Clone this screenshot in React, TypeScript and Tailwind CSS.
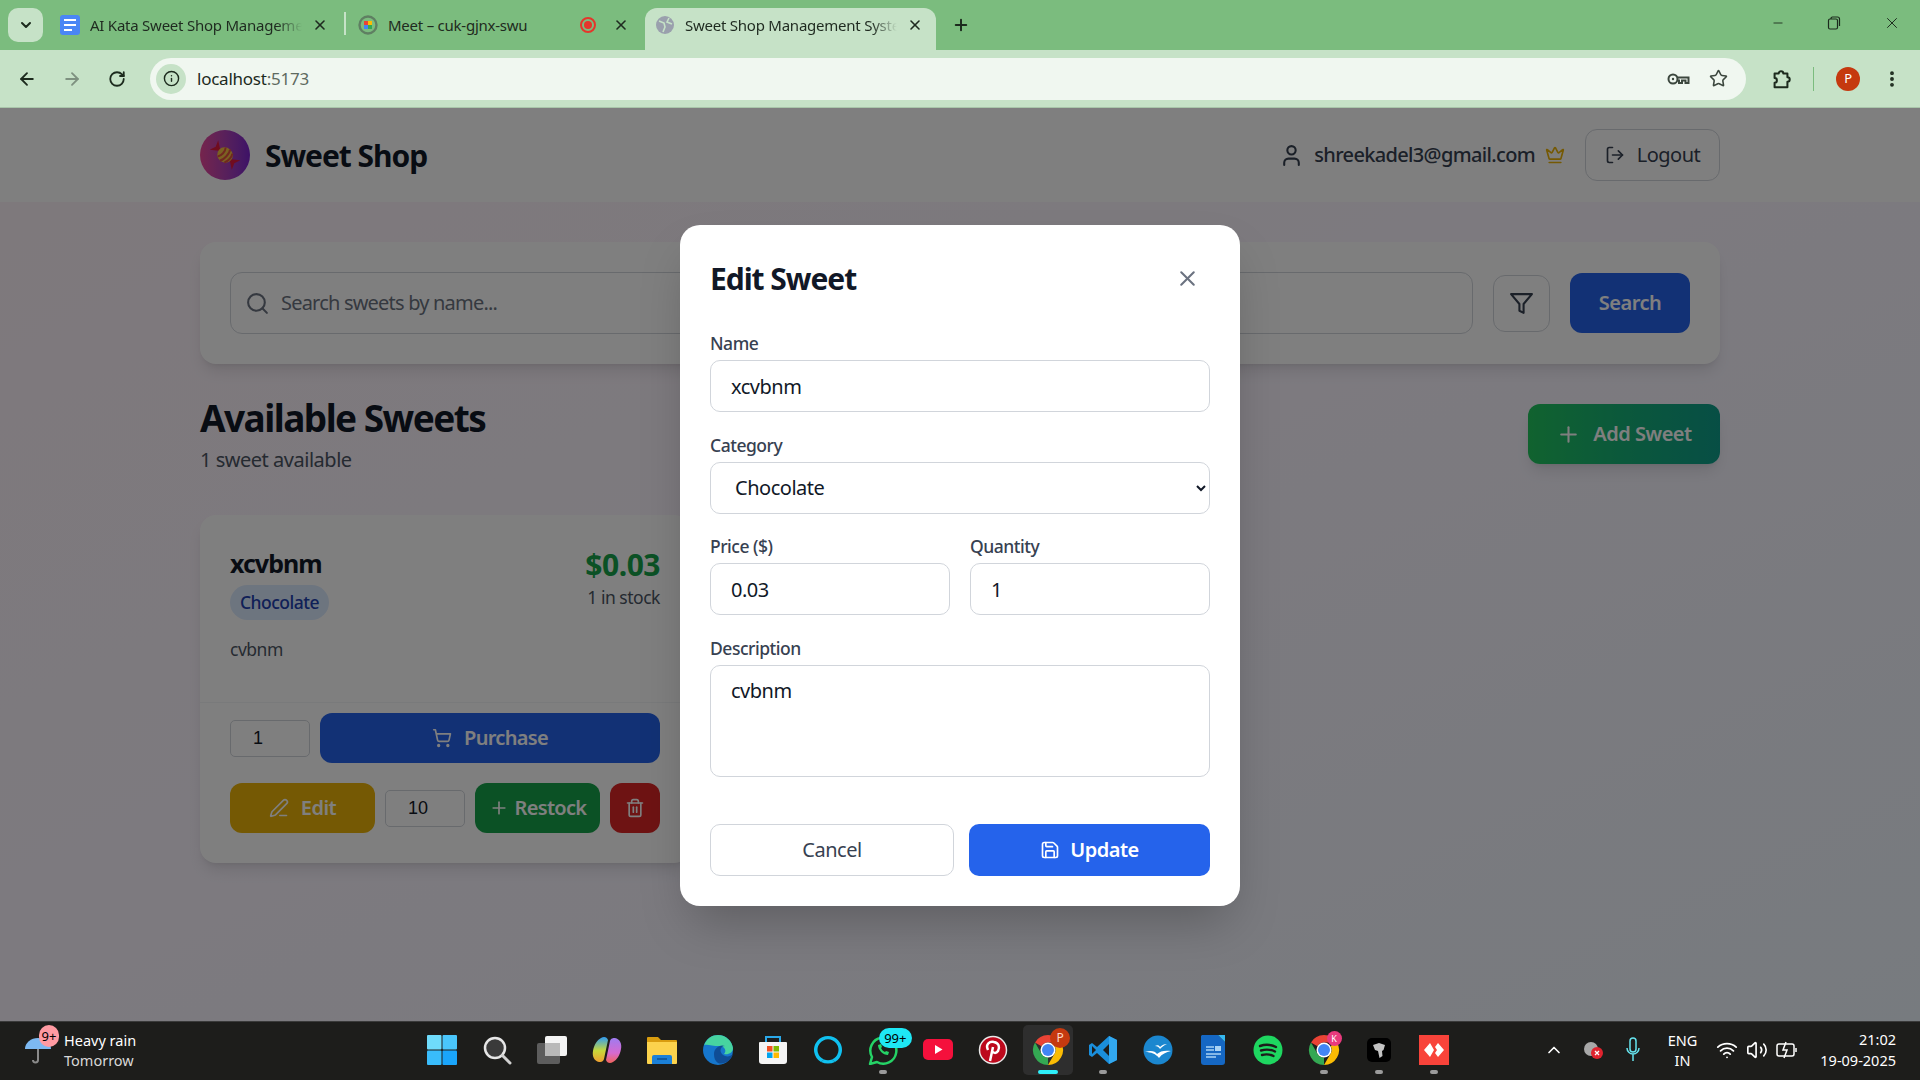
import {
  ArrowLeft,
  ArrowRight,
  ChevronDown,
  ChevronUp,
  Crown,
  EllipsisVertical,
  Info,
  LogOut,
  Minus,
  PenLine,
  Plus,
  RotateCw,
  Save,
  Search,
  ShoppingCart,
  Star,
  Trash2,
  User,
  Volume2,
  Wifi,
  X,
} from 'lucide-react';
import type { ReactNode } from 'react';

const sans = 'font-["Noto_Sans",sans-serif]';

function ChromeLogo({ size = 32 }: { size?: number }) {
  return (
    <svg width={size} height={size} viewBox="0 0 32 32">
      <path d="M16 1a15 15 0 0 1 13 7.5H16a7.5 7.5 0 0 0-6.5 3.75L3 8.5A15 15 0 0 1 16 1z" fill="#ea4335" />
      <path d="M29 8.5A15 15 0 0 1 16 31l6.5-11.25A7.5 7.5 0 0 0 22.5 12z" fill="#fbbc04" />
      <path d="M16 31A15 15 0 0 1 3 8.5l6.5 11.25A7.5 7.5 0 0 0 16 23.5z" fill="#34a853" />
      <circle cx="16" cy="16" r="7.5" fill="#fff" />
      <circle cx="16" cy="16" r="6" fill="#4285f4" />
    </svg>
  );
}

function Tab({ icon, title, fade, active, children }: { icon: ReactNode; title: string; fade?: boolean; active?: boolean; children?: ReactNode }) {
  return (
    <div className={`flex h-[42px] w-full items-center pb-[8px] ${active ? 'pl-[10px] pr-[13px]' : 'pl-3 pr-[16px]'}`}>
      {icon}
      <span
        className={`ml-[10px] min-w-0 flex-1 overflow-hidden whitespace-nowrap text-[15px] text-[#1f2a20] ${
          fade ? '[mask-image:linear-gradient(to_right,black_88%,transparent)]' : ''
        }`}
      >
        {title}
      </span>
      {children}
      <X size={16} strokeWidth={2.4} className="ml-[10px] shrink-0 text-[#1f2a20]" />
    </div>
  );
}

function BrowserBar() {
  return (
    <div className={`${sans} shrink-0 tracking-[-0.015em]`}>
      <div className="flex h-[50px] items-end bg-[#7bbc7e]">
        <div className="mb-2 ml-2 flex h-[34px] w-[35px] items-center justify-center rounded-[10px] bg-[#c6e2c7]">
          <ChevronDown size={16} strokeWidth={3} className="text-[#1c2a1d]" />
        </div>
        <div className="ml-[5px] w-[296px]">
          <Tab
            fade
            title="AI Kata Sweet Shop Management"
            icon={
              <svg width="20" height="20" viewBox="0 0 20 20" className="shrink-0">
                <rect width="20" height="20" rx="3" fill="#4a86f5" />
                <path d="M4 5h12M4 10h12M4 15h8" stroke="#fff" strokeWidth="2" />
              </svg>
            }
          />
        </div>
        <div className="mb-[15px] h-[23px] w-[2px] bg-[#c6e2c7]" />
        <div className="w-[299px]">
          <Tab
            title="Meet – cuk-gjnx-swu"
            icon={
              <svg width="20" height="20" viewBox="0 0 20 20" className="shrink-0">
                <circle cx="10" cy="10" r="8.5" fill="none" stroke="#5f7f62" strokeWidth="2.4" />
                <rect x="6" y="6" width="4" height="4" fill="#ea4335" />
                <rect x="10" y="6" width="4" height="4" fill="#fbbc04" />
                <rect x="6" y="10" width="4" height="4" fill="#4285f4" />
                <rect x="10" y="10" width="4" height="4" fill="#34a853" />
              </svg>
            }
          >
            <svg width="18" height="18" viewBox="0 0 18 18" className="mr-[6px] shrink-0">
              <circle cx="9" cy="9" r="7" fill="none" stroke="#e5352b" strokeWidth="2" />
              <circle cx="9" cy="9" r="4" fill="#e5352b" />
            </svg>
          </Tab>
        </div>
        <div className="w-[291px] rounded-t-[12px] bg-[#c6e2c7]">
          <Tab
            fade
            active
            title="Sweet Shop Management System"
            icon={
              <svg width="20" height="20" viewBox="0 0 20 20" className="shrink-0">
                <circle cx="10" cy="10" r="9" fill="#9aa0ad" />
                <path d="M4 6l5 2 1 4-2 5M14 3l-2 4 5 2" fill="none" stroke="#c6e2c7" strokeWidth="1.6" />
              </svg>
            }
          />
        </div>
        <Plus size={18} strokeWidth={2.6} className="mb-[16px] ml-4 text-[#1c2a1d]" />
        <div className="mb-[18px] ml-auto flex w-[154px] items-center text-[#1c2a1d]">
          <Minus size={14} strokeWidth={1.5} className="ml-[5px]" />
          <svg width="14" height="14" viewBox="0 0 14 14" className="ml-[42px]" fill="none" stroke="currentColor" strokeWidth="1.2">
            <rect x="1.5" y="3" width="9" height="10" rx="1.5" />
            <path d="M4 3V2.5A1.5 1.5 0 0 1 5.5 1h5A2 2 0 0 1 12.5 3v7" />
          </svg>
          <X size={18} strokeWidth={1.3} className="ml-[42px]" />
        </div>
      </div>
      <div className="flex h-[58px] items-center border-b border-[#a9c6aa] bg-[#c6e2c7] text-[#1c2a1d]">
        <ArrowLeft size={20} strokeWidth={2.2} className="ml-[17px]" />
        <ArrowRight size={20} strokeWidth={2.2} className="ml-[25px] text-[#7e9180]" />
        <RotateCw size={18} strokeWidth={2.4} className="ml-[26px]" />
        <div className="ml-[24px] flex h-[42px] w-[1596px] items-center rounded-full bg-[#f0f7f0] pl-[6px] pr-[18px]">
          <div className="flex h-[30px] w-[30px] items-center justify-center rounded-full bg-[#c6e2c7]">
            <Info size={17} strokeWidth={2} />
          </div>
          <span className="ml-[11px] text-[17px] leading-none">
            localhost<span className="text-[#5e6a60]">:5173</span>
          </span>
          <svg width="24" height="16" viewBox="0 0 24 16" className="ml-auto" fill="none" stroke="#3c473e" strokeWidth="2">
            <circle cx="7" cy="8" r="4.5" />
            <circle cx="7" cy="8" r="1.2" fill="#3c473e" strokeWidth="0" />
            <path d="M11.5 6.5H22.5V12H19.5V9.5H16V12H13V9.5H11.5" />
          </svg>
          <Star size={19} strokeWidth={2} className="ml-[19px] text-[#3c473e]" />
        </div>
        <svg width="22" height="24" viewBox="0 0 24 26" fill="none" stroke="currentColor" strokeWidth="2.2" strokeLinejoin="round" className="ml-[24px]">
          <path d="M5 7h4.5a2.5 2.5 0 0 1 5 0H19v4a2.5 2.5 0 0 1 0 5v6H5v-5a2.5 2.5 0 0 0 0-5z" />
        </svg>
        <div className="ml-[21px] h-[24px] w-[1px] bg-[#7bbc7e]" />
        <div className="ml-[22px] flex h-[24px] w-[24px] items-center justify-center rounded-full bg-[#c5390f] text-[13px] text-white">
          P
        </div>
        <EllipsisVertical size={20} strokeWidth={2.6} className="ml-[22px]" />
      </div>
    </div>
  );
}

function CandyLogo() {
  return (
    <svg width="30" height="30" viewBox="0 0 30 30">
      <g transform="rotate(42 15 15)">
        <path d="M9 15L0 8.5l2.5 6.5L0 21.5z" fill="#e0193f" />
        <path d="M21 15l9-6.5-2.5 6.5 2.5 6.5z" fill="#e0193f" />
        <ellipse cx="15" cy="15" rx="8" ry="7.5" fill="#f6c244" />
        <path d="M10.5 9c2.5 3 2.5 9 0 12M15 7.5c2.5 3 2.5 12 0 15M19.5 9c2 3 2 9 0 12" fill="none" stroke="#e2513f" strokeWidth="2" />
      </g>
    </svg>
  );
}

function PageHeader() {
  return (
    <header className="bg-white">
      <div className="mx-auto flex h-[94px] w-[1520px] items-center">
        <div className="flex h-[50px] w-[50px] items-center justify-center rounded-full bg-gradient-to-r from-[#ec4899] to-[#7c22ce]">
          <CandyLogo />
        </div>
        <h1 className="ml-[15px] text-[30px] font-bold tracking-[-0.035em] text-[#111827]">Sweet Shop</h1>
        <div className="ml-auto flex items-center text-[#374151]">
          <User size={25} strokeWidth={2} />
          <span className="ml-[10px] text-[20px] font-medium tracking-[-0.033em]">shreekadel3@gmail.com</span>
          <Crown size={20} strokeWidth={2} className="ml-[10px] text-[#eab308]" />
          <button type="button" className="ml-[20px] flex h-[52px] w-[135px] items-center justify-center gap-[12px] rounded-[12px] border border-[#d1d5db] text-[20px] text-[#374151]">
            <LogOut size={20} strokeWidth={2} />
            Logout
          </button>
        </div>
      </div>
    </header>
  );
}

function SearchPanel() {
  return (
    <div className="flex items-center gap-5 rounded-[16px] bg-white p-[30px] shadow-lg">
      <div className="flex h-[62px] flex-1 items-center rounded-[12px] border border-[#d1d5db] px-[14px] text-[20px] text-[#6b7280]">
        <Search size={25} strokeWidth={2} />
        <span className="ml-[11px] tracking-[-0.04em]">Search sweets by name...</span>
      </div>
      <button type="button" className="flex h-[57px] w-[57px] items-center justify-center rounded-[12px] border border-[#d1d5db] text-[#374151]">
        <svg width="25" height="25" viewBox="0 0 24 24" fill="none" stroke="currentColor" strokeWidth="2" strokeLinejoin="round">
          <polygon points="22 3 2 3 10 12.46 10 19 14 21 14 12.46 22 3" />
        </svg>
      </button>
      <button type="button" className="h-[60px] w-[120px] rounded-[12px] bg-[#2563eb] text-[20px] font-semibold text-white">Search</button>
    </div>
  );
}

function SweetCard() {
  const smallInput = 'h-[37px] w-[80px] rounded-[5px] border border-[#d1d5db] bg-transparent px-[22px] font-["Liberation_Sans",sans-serif] text-[18px] tracking-normal text-[#111827]';
  return (
    <div className="w-[490px] rounded-[16px] bg-white shadow-lg">
      <div className="h-[188px] border-b border-[#f3f4f6] px-[30px] pt-[29px]">
        <div className="flex items-start justify-between">
          <div>
            <h3 className="text-[25px] font-bold leading-[38px] tracking-[-0.04em] text-[#111827]">xcvbnm</h3>
            <span className="mt-[3px] flex h-[35px] w-[99px] items-center justify-center rounded-full bg-[#dbeafe] text-[17.5px] font-medium text-[#1e40af]">Chocolate</span>
          </div>
          <div className="text-right">
            <div className="text-[30px] font-bold leading-[41px] text-[#16a34a]">$0.03</div>
            <div className="text-[17.5px] leading-[25px] text-[#4b5563]">1 in stock</div>
          </div>
        </div>
        <p className="mt-[17px] text-[17.5px] leading-[25px] text-[#4b5563]">cvbnm</p>
      </div>
      <div className="flex flex-col gap-5 px-[30px] pb-[30px] pt-[10px]">
        <div className="flex items-center gap-[10px]">
          <input readOnly value="1" className={smallInput} />
          <button type="button" className="flex h-[50px] flex-1 items-center justify-center gap-[12px] rounded-[12px] bg-[#2563eb] text-[20px] font-semibold tracking-[-0.035em] text-white">
            <ShoppingCart size={20} strokeWidth={2} />
            Purchase
          </button>
        </div>
        <div className="flex items-center gap-[10px]">
          <button type="button" className="flex h-[50px] w-[145px] items-center justify-center gap-[12px] rounded-[12px] bg-[#eab308] text-[20px] font-semibold text-white">
            <PenLine size={20} strokeWidth={2} />
            Edit
          </button>
          <input readOnly value="10" className={smallInput} />
          <button type="button" className="flex h-[50px] w-[125px] items-center justify-center gap-[6px] rounded-[12px] bg-[#16a34a] text-[20px] font-semibold tracking-[-0.035em] text-white">
            <Plus size={20} strokeWidth={2} />
            Restock
          </button>
          <button type="button" className="flex h-[50px] w-[50px] items-center justify-center rounded-[12px] bg-[#dc2626] text-white">
            <Trash2 size={20} strokeWidth={2} />
          </button>
        </div>
      </div>
    </div>
  );
}

function Field({ label, children }: { label: string; children: ReactNode }) {
  return (
    <div className="flex min-w-0 flex-1 flex-col">
      <label className="mb-[4px] text-[17.5px] font-medium leading-[25px] text-[#374151]">{label}</label>
      {children}
    </div>
  );
}

function EditModal() {
  const field = 'w-full rounded-[10px] border border-[#d1d5db] bg-white px-5 text-[20px] text-[#111827]';
  return (
    <div className="w-[560px] rounded-[20px] bg-white p-[30px] shadow-2xl">
      <div className="mb-[30px] flex h-[46px] items-center justify-between">
        <h2 className="text-[30px] font-bold tracking-[-0.035em] text-[#111827]">Edit Sweet</h2>
        <X size={25} strokeWidth={2} className="mr-[10px] text-[#6b7280]" />
      </div>
      <div className="flex flex-col gap-[20.5px]">
        <Field label="Name">
          <input readOnly value="xcvbnm" className={`${field} h-[52px]`} />
        </Field>
        <Field label="Category">
          <select defaultValue="Chocolate" className={`${field} h-[52px]`}>
            <option>Chocolate</option>
            <option>Candy</option>
            <option>Gummy</option>
          </select>
        </Field>
        <div className="flex gap-5">
          <Field label="Price ($)">
            <input readOnly value="0.03" className={`${field} h-[52px]`} />
          </Field>
          <Field label="Quantity">
            <input readOnly value="1" className={`${field} h-[52px]`} />
          </Field>
        </div>
        <Field label="Description">
          <textarea readOnly value="cvbnm" className={`${field} h-[112px] resize-none py-[10px]`} />
        </Field>
      </div>
      <div className="mt-[47px] flex gap-[15px]">
        <button type="button" className="h-[52px] w-[244px] rounded-[10px] border border-[#d1d5db] text-[20px] text-[#374151]">Cancel</button>
        <button type="button" className="flex h-[52px] flex-1 items-center justify-center gap-[10px] rounded-[10px] bg-[#2563eb] text-[20px] font-semibold text-white">
          <Save size={20} strokeWidth={2} />
          Update
        </button>
      </div>
    </div>
  );
}

function SweetPage() {
  return (
    <main className={`${sans} relative min-h-0 flex-1 overflow-hidden bg-gradient-to-br from-[#fdf2f8] via-[#faf5ff] to-[#eff6ff] tracking-[-0.03em]`}>
      <PageHeader />
      <div className="mx-auto w-[1520px] pt-[40px]">
        <SearchPanel />
        <div className="mb-[38px] mt-[31px] flex items-center justify-between">
          <div>
            <h2 className="text-[37px] font-bold leading-[45px] tracking-[-0.042em] text-[#111827]">Available Sweets</h2>
            <p className="mt-[3px] text-[20px] leading-[34px] text-[#4b5563]">1 sweet available</p>
          </div>
          <button type="button" className="mb-[4px] flex h-[60px] w-[192px] items-center justify-center gap-[12px] rounded-[12px] bg-gradient-to-r from-[#22c55e] to-[#0f9d8a] text-[20px] font-semibold text-white shadow-lg">
            <Plus size={25} strokeWidth={2} />
            Add Sweet
          </button>
        </div>
        <SweetCard />
      </div>
      <div className="absolute inset-0 flex items-center justify-center bg-black/50 pt-[2px]">
        <EditModal />
      </div>
    </main>
  );
}

function TaskIcon({ children, dot, active }: { children: ReactNode; dot?: boolean; active?: boolean }) {
  return (
    <div className={`relative mx-[2.55px] flex h-[50px] w-[50px] items-center justify-center rounded-[5px] ${active ? 'bg-[#2e2e2e]' : ''}`}>
      {children}
      {dot && <span className="absolute bottom-[1px] h-[4px] w-[8px] rounded-full bg-[#9b9b9b]" />}
      {active && <span className="absolute bottom-[1px] h-[4px] w-[20px] rounded-full bg-[#2ef0fb]" />}
    </div>
  );
}

function Taskbar() {
  return (
    <div className={`${sans} flex h-[59px] shrink-0 items-center border-t border-[#3a3a3a] bg-[#1d1d1b] pb-[2px] text-white`}>
      <div className="relative flex w-[414.5px] shrink-0 items-center">
        <svg width="28" height="32" viewBox="0 0 28 32" className="ml-[24px]">
          <path d="M1 15a13 11 0 0 1 26 0z" fill="#7db9f2" />
          <path d="M14 15v11a2.5 2.5 0 0 1-5 0" fill="none" stroke="#8a8a8a" strokeWidth="2" />
        </svg>
        <span className="absolute left-[39px] top-[-5px] flex h-[22px] w-[20px] items-center justify-center rounded-full bg-[#ff9aa2] text-[13px] leading-none text-black">9+</span>
        <div className="ml-[12px] flex flex-col text-[14.5px] leading-[20px]">
          <span>Heavy rain</span>
          <span className="text-[#d8d8d8]">Tomorrow</span>
        </div>
      </div>
      <TaskIcon>
        <svg width="30" height="30" viewBox="0 0 30 30">
          <rect width="14.5" height="14.5" rx="1" fill="#6fdcfb" />
          <rect x="15.5" width="14.5" height="14.5" rx="1" fill="#4ac6fb" />
          <rect y="15.5" width="14.5" height="14.5" rx="1" fill="#39bcfb" />
          <rect x="15.5" y="15.5" width="14.5" height="14.5" rx="1" fill="#1aa5fb" />
        </svg>
      </TaskIcon>
      <TaskIcon>
        <svg width="30" height="30" viewBox="0 0 30 30" fill="none">
          <circle cx="13" cy="13" r="10" fill="#3a3a3a" stroke="#e6e6e6" strokeWidth="2.5" />
          <path d="M20.5 20.5L28 28" stroke="#d0d0d0" strokeWidth="3" strokeLinecap="round" />
        </svg>
      </TaskIcon>
      <TaskIcon>
        <svg width="30" height="30" viewBox="0 0 30 30">
          <rect y="8" width="23" height="21" rx="2" fill="#5d5d5d" />
          <rect x="8" y="1" width="22" height="20" rx="2" fill="#f4f4f4" />
          <rect x="8" y="8" width="15" height="13" fill="#b9b9b9" />
        </svg>
      </TaskIcon>
      <TaskIcon>
        <svg width="30" height="30" viewBox="0 0 30 30">
          <path d="M9 3c3-2 6-1 7 2l-4 19c-1 3-3 3-5 3-5-1-7-6-6-11 1-6 4-11 8-13z" fill="url(#cpa)" />
          <path d="M21 27c-3 2-6 1-7-2l4-19c1-3 3-3 5-3 5 1 7 6 6 11-1 6-4 11-8 13z" fill="url(#cpb)" />
          <defs>
            <linearGradient id="cpa" x1="0" y1="0" x2="0" y2="1">
              <stop offset="0" stopColor="#2f9cf3" />
              <stop offset="0.55" stopColor="#c8d83a" />
              <stop offset="1" stopColor="#f0a030" />
            </linearGradient>
            <linearGradient id="cpb" x1="0" y1="0" x2="0" y2="1">
              <stop offset="0" stopColor="#9e7cf0" />
              <stop offset="0.6" stopColor="#d66ad0" />
              <stop offset="1" stopColor="#f2645a" />
            </linearGradient>
          </defs>
        </svg>
      </TaskIcon>
      <TaskIcon>
        <svg width="30" height="30" viewBox="0 0 30 30">
          <path d="M0 3a1 1 0 0 1 1-1h10l3 3h15a1 1 0 0 1 1 1v3H0z" fill="#d99d0f" />
          <path d="M0 7h30v21a1 1 0 0 1-1 1H1a1 1 0 0 1-1-1z" fill="#fcd34d" />
          <path d="M5 22a2 2 0 0 1 2-2h16a2 2 0 0 1 2 2v7H5z" fill="#1b80d8" />
          <path d="M10 24h10" stroke="#0d4f92" strokeWidth="1.5" />
        </svg>
      </TaskIcon>
      <TaskIcon>
        <svg width="30" height="30" viewBox="0 0 30 30">
          <circle cx="15" cy="15" r="15" fill="#1676cc" />
          <path d="M1 11C3 3 10 0 15 0c8 0 14 6 15 13 0 5-5 7-9 6 3-3 1-8-5-8-7 0-15-3-15 0z" fill="#47d4a0" />
          <path d="M11 19c0-6 6-10 11-8-6 0-6 8 0 10 3 1 6 0 8-2-2 7-9 11-15 9-3-2-4-5-4-9z" fill="#0f4d96" />
        </svg>
      </TaskIcon>
      <TaskIcon>
        <svg width="30" height="30" viewBox="0 0 30 30">
          <path d="M2 7h26a1 1 0 0 1 1 1v18a3 3 0 0 1-3 3H4a3 3 0 0 1-3-3V8a1 1 0 0 1 1-1z" fill="#f4f4f4" />
          <path d="M8 7V2h14v5" fill="none" stroke="#2aa8e8" strokeWidth="2" />
          <rect x="9" y="11" width="5.5" height="5.5" fill="#f25022" />
          <rect x="15.5" y="11" width="5.5" height="5.5" fill="#7fba00" />
          <rect x="9" y="17.5" width="5.5" height="5.5" fill="#00a4ef" />
          <rect x="15.5" y="17.5" width="5.5" height="5.5" fill="#ffb900" />
        </svg>
      </TaskIcon>
      <TaskIcon>
        <svg width="30" height="30" viewBox="0 0 30 30">
          <path d="M8 27A14 14 0 1 1 22 27l-3-2.5A10.5 10.5 0 1 0 11 24.5z" fill="#10c1f0" />
          <path d="M11 24.5Q15 26 19 24.5L22 27Q15 30 8 27z" fill="#10c1f0" />
        </svg>
      </TaskIcon>
      <TaskIcon dot>
        <svg width="30" height="30" viewBox="0 0 30 30" fill="none">
          <path d="M2 29l2-7A13 13 0 1 1 9 27z" stroke="#25d366" strokeWidth="2.5" strokeLinejoin="round" />
          <path d="M10 10c0 5 5 10 10 10l1-3-3-1-1 1c-2-1-3-2-4-4l1-1-1-3z" fill="#25d366" />
        </svg>
        <span className="absolute left-[21px] top-[3px] flex h-[20px] w-[33px] items-center justify-center rounded-full bg-[#1ee8f5] text-[13px] leading-none text-black">99+</span>
      </TaskIcon>
      <TaskIcon>
        <svg width="30" height="30" viewBox="0 0 30 30">
          <rect y="4" width="30" height="21" rx="5" fill="#f5103c" />
          <path d="M12 10l7.5 4.5L12 19z" fill="#fff" />
        </svg>
      </TaskIcon>
      <TaskIcon>
        <svg width="30" height="30" viewBox="0 0 30 30">
          <circle cx="15" cy="15" r="13.5" fill="#bd081c" stroke="#e8e8e8" strokeWidth="1.5" />
          <path d="M12 26l3-14M10 15c-3-6 2-9 6-8 5 1 6 5 4 9-2 3-5 2-6 0" fill="none" stroke="#fff" strokeWidth="2.5" />
        </svg>
      </TaskIcon>
      <TaskIcon active>
        <div className="relative">
          <ChromeLogo />
          <span className="absolute right-[-6px] top-[-6px] flex h-[20px] w-[20px] items-center justify-center rounded-full bg-[#c5390f] text-[12px] leading-none text-[#ffd9c8]">P</span>
        </div>
      </TaskIcon>
      <TaskIcon dot>
        <svg width="30" height="30" viewBox="0 0 30 30">
          <path d="M21 1l8 4v20l-8 4-12-11-5 4-3-2v-10l3-2 5 4z" fill="#1a8fdc" />
          <path d="M21 9l-6 6 6 6z" fill="#1d1d1b" />
          <path d="M4 11v8l4-4z" fill="#1d1d1b" />
          <path d="M21 1l8 4v20l-8 4z" fill="#32a8ef" />
        </svg>
      </TaskIcon>
      <TaskIcon>
        <svg width="30" height="30" viewBox="0 0 30 30">
          <circle cx="15" cy="15" r="14.5" fill="#1b87cf" />
          <path d="M2 17c6-2 10-1 12 2 3-3 8-4 14-3-5 1-9 3-12 7-3-4-8-6-14-6zM12 11c2-1 4-1 5 1 2-2 4-3 7-3-3 1-5 3-7 5-1-2-3-3-5-3z" fill="#fff" />
        </svg>
      </TaskIcon>
      <TaskIcon>
        <svg width="30" height="30" viewBox="0 0 30 30">
          <path d="M4 0h16l7 7v20a3 3 0 0 1-3 3H6a3 3 0 0 1-3-3V1z" fill="#1567c3" />
          <path d="M20 0h7v7z" fill="#35b8ef" />
          <path d="M8 12h8M8 15h8M8 19h15M8 22h10" stroke="#a9d3f5" strokeWidth="1.5" />
          <rect x="17" y="11" width="6" height="5" fill="#a9d3f5" />
        </svg>
      </TaskIcon>
      <TaskIcon>
        <svg width="30" height="30" viewBox="0 0 30 30" fill="none">
          <circle cx="15" cy="15" r="14.5" fill="#1ed760" />
          <path d="M7 11c6-2 11-1.5 16 1M8 15.5c5-1.5 10-1 14 1M9 20c4-1 8-.7 11.5 1" stroke="#1d1d1b" strokeWidth="2.4" strokeLinecap="round" />
        </svg>
      </TaskIcon>
      <TaskIcon dot>
        <div className="relative">
          <ChromeLogo />
          <span className="absolute right-[-2px] top-[-3px] flex h-[15px] w-[15px] items-center justify-center rounded-full bg-[#e93a7d] text-[9px] leading-none text-white">K</span>
        </div>
      </TaskIcon>
      <TaskIcon dot>
        <svg width="24" height="24" viewBox="0 0 24 24">
          <rect width="24" height="24" rx="5" fill="#000" />
          <path d="M6 7l6-2 6 2-1.5 5-1.5 1 .5 5-3 2-1.5-7-3-1z" fill="#c2c2c2" />
        </svg>
      </TaskIcon>
      <TaskIcon dot>
        <svg width="30" height="30" viewBox="0 0 30 30">
          <rect width="30" height="30" fill="#f8433a" />
          <path d="M11 8l-6 7 6 7 4-7zM19 8l-3 4 2 3-2 3 3 4 6-7z" fill="#fff" />
        </svg>
      </TaskIcon>
      <div className="ml-auto flex items-center pr-[24px]">
        <ChevronUp size={20} strokeWidth={2} className="mr-[18px]" />
        <svg width="22" height="20" viewBox="0 0 22 20" className="mr-[21px]">
          <circle cx="9" cy="9" r="7" fill="#a8a8a8" />
          <circle cx="15" cy="13" r="6" fill="#e0232e" />
          <path d="M13 11l4 4M17 11l-4 4" stroke="#fff" strokeWidth="1.3" />
        </svg>
        <svg width="16" height="26" viewBox="0 0 16 26" fill="none" stroke="#66e3ee" strokeWidth="1.5" className="mr-[27px]">
          <rect x="5" y="1" width="6" height="14" rx="3" />
          <path d="M2 11a6 6 0 0 0 12 0M8 17v7" />
        </svg>
        <div className="mr-[19px] flex flex-col items-center text-[14.5px] leading-[20px]">
          <span>ENG</span>
          <span>IN</span>
        </div>
        <Wifi size={22} strokeWidth={2} className="mr-[8px]" />
        <Volume2 size={22} strokeWidth={1.8} className="mr-[8px]" />
        <svg width="22" height="20" viewBox="0 0 22 20" fill="none" stroke="currentColor" strokeWidth="1.5" className="mr-[22px]">
          <rect x="1" y="4" width="17" height="12" rx="2" />
          <path d="M20 8v4M10 2L7 10h4l-3 8" />
        </svg>
        <div className="flex flex-col items-end text-[14.5px] leading-[21px]">
          <span>21:02</span>
          <span>19-09-2025</span>
        </div>
      </div>
    </div>
  );
}

export default function App() {
  return (
    <div className="flex h-[1080px] w-[1920px] flex-col overflow-hidden">
      <BrowserBar />
      <SweetPage />
      <Taskbar />
    </div>
  );
}
